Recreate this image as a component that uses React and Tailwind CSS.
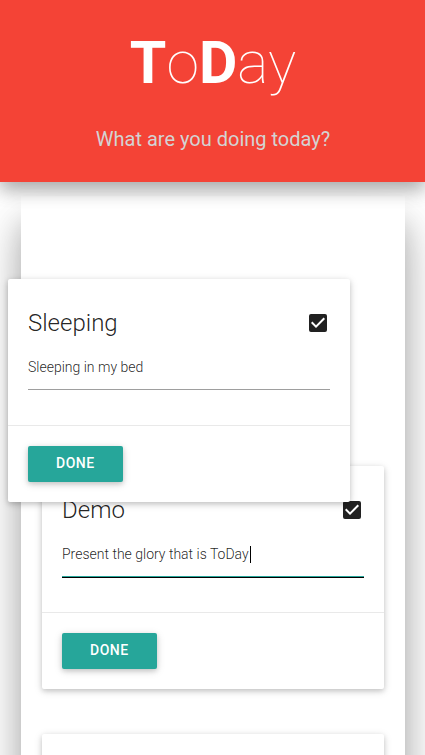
import { useState } from 'react';
import { MdCheckBox, MdCheckBoxOutlineBlank } from 'react-icons/md';

const TASKS = [
  { id: 'sleeping', title: 'Sleeping', note: 'Sleeping in my bed', dragged: true },
  { id: 'demo', title: 'Demo', note: 'Present the glory that is ToDay', active: true },
];

function TaskCard({ task }) {
  const [checked, setChecked] = useState(true);
  const [note, setNote] = useState(task.note);
  const Icon = checked ? MdCheckBox : MdCheckBoxOutlineBlank;

  return (
    <article
      className={`rounded-[2px] bg-white shadow-[0_2px_5px_0_rgba(0,0,0,0.16),0_2px_10px_0_rgba(0,0,0,0.12)] ${
        task.dragged ? 'relative z-10 -left-[34px] top-[81px]' : ''
      }`}
    >
      <div className="px-5 pt-5 pb-[35px]">
        <div className="flex h-12 items-center justify-between">
          <h2 className="text-2xl font-light">{task.title}</h2>
          <label className="cursor-pointer">
            <input
              type="checkbox"
              className="sr-only"
              aria-label={`Select ${task.title}`}
              checked={checked}
              onChange={(e) => setChecked(e.target.checked)}
            />
            <Icon className="size-6 text-[#212121]" aria-hidden="true" />
          </label>
        </div>
        <div className="relative">
          <input
            type="text"
            aria-label={`${task.title} description`}
            value={note}
            onChange={(e) => setNote(e.target.value)}
            className={`block h-[43px] w-full border-b bg-transparent pb-[2px] text-sm font-light outline-none ${
              task.active ? 'border-[#26a69a] caret-transparent shadow-[0_1px_0_0_#000]' : 'border-[#9e9e9e]'
            }`}
          />
          {task.active && <span className="absolute left-[188px] top-3 h-[17px] w-px bg-black" />}
        </div>
      </div>
      <div className="border-t border-[#e9e9e9] p-5">
        <button
          type="button"
          className="block h-9 rounded-[2px] bg-[#26a69a] px-7 pb-[2px] text-sm font-medium tracking-[0.5px] text-white uppercase shadow-[0_2px_5px_0_rgba(0,0,0,0.16),0_2px_10px_0_rgba(0,0,0,0.12)]"
        >
          Done
        </button>
      </div>
    </article>
  );
}

export default function App() {
  return (
    <div className="h-screen overflow-hidden bg-white font-[Roboto,sans-serif] text-black/87">
      <header className="relative z-10 bg-[#f44336] pt-[29px] pr-5 pb-7 pl-[21px] text-center shadow-[0_8px_17px_0_rgba(0,0,0,0.2),0_6px_20px_0_rgba(0,0,0,0.19)]">
        <h1 className="text-[59px] leading-[68px] font-thin text-white">
          <b className="font-bold">T</b>o<b className="font-bold">D</b>ay
        </h1>
        <p className="mt-[27px] text-xl leading-[30px] text-[#d3d3d3]">What are you doing today?</p>
      </header>
      <main className="mt-[14px] mr-5 ml-[21px] flex flex-col gap-[45px] bg-white px-[21px] pt-[2px] pb-10 shadow-[0_27px_28px_0_rgba(0,0,0,0.22),0_32px_50px_0_rgba(0,0,0,0.2)]">
        {TASKS.map((task) => (
          <TaskCard key={task.id} task={task} />
        ))}
        <article className="h-56 rounded-[2px] bg-white shadow-[0_2px_5px_0_rgba(0,0,0,0.16),0_2px_10px_0_rgba(0,0,0,0.12)]" />
      </main>
    </div>
  );
}
